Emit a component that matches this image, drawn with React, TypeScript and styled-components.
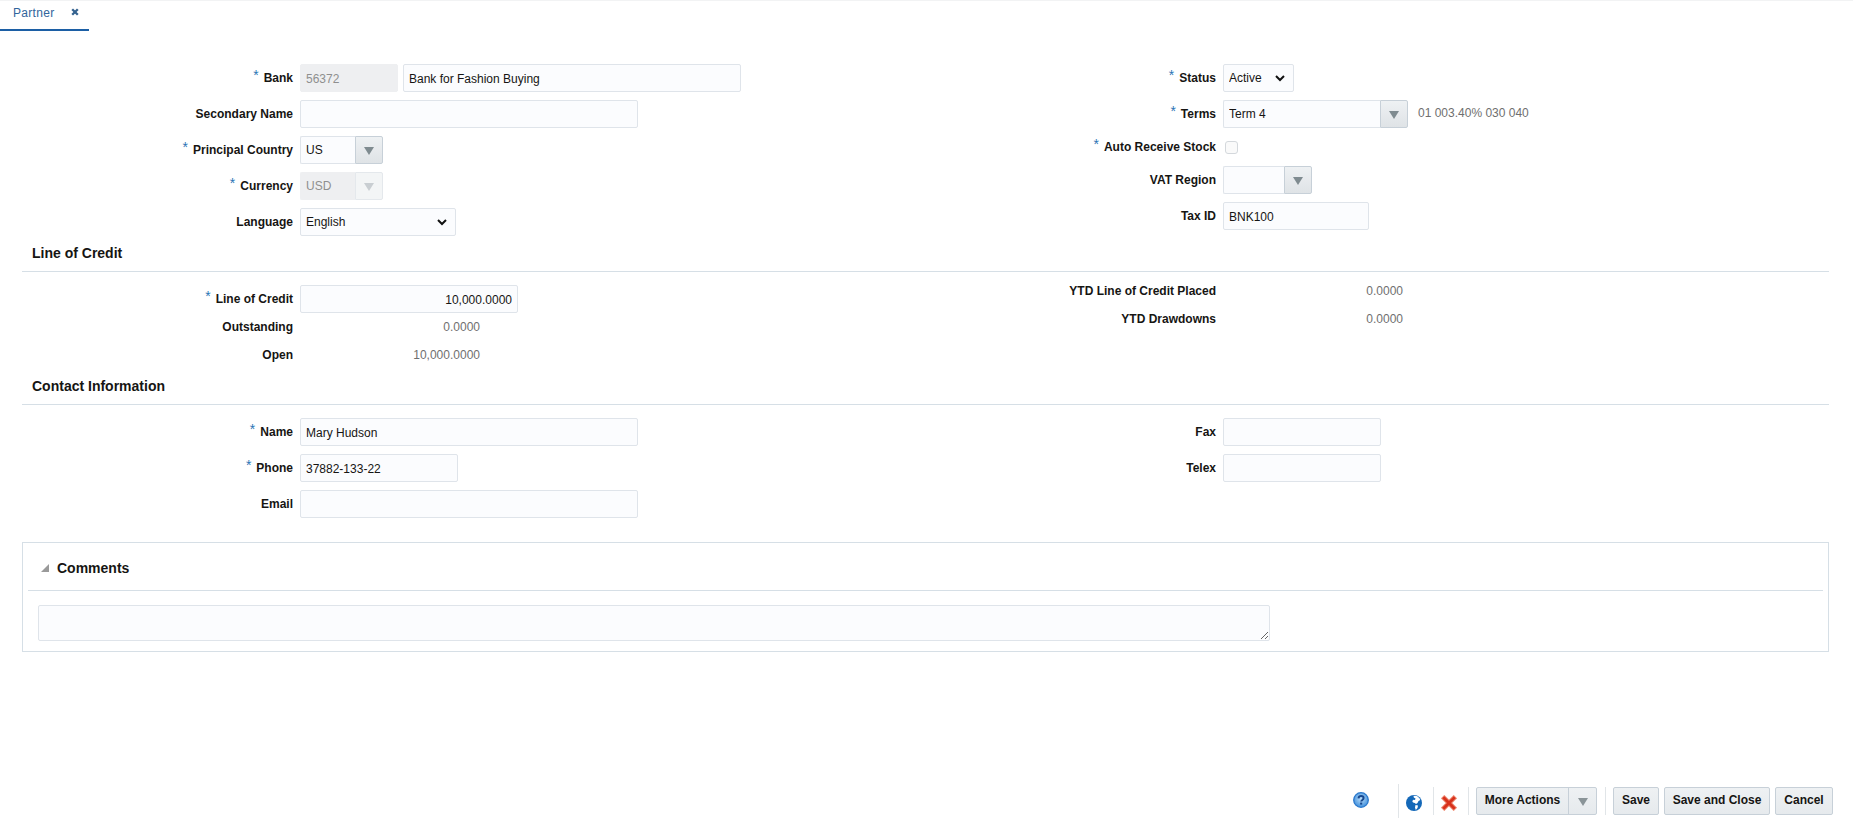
import React from "react";
import styled, { createGlobalStyle } from "styled-components";

const Global = createGlobalStyle`
  html, body { margin: 0; padding: 0; background: #fff; }
  body { font-family: "Liberation Sans", Arial, sans-serif; font-size: 12px; color: #161513; }
  * { box-sizing: border-box; }
`;

const Page = styled.div`
  height: 835px;
  display: flex;
  flex-direction: column;
  overflow: hidden;
  border-top: 1px solid #f2f3f4;
`;

const TabBar = styled.div`
  display: flex;
  height: 30px;
`;

const Tab = styled.div`
  width: 89px;
  height: 30px;
  padding-left: 13px;
  padding-bottom: 5px;
  display: flex;
  align-items: center;
  color: #31659c;
  letter-spacing: 0.3px;
  border-bottom: 2px solid #1c5fa5;
`;

const TabClose = styled.svg`
  width: 8px;
  height: 8px;
  margin-left: 17px;
  margin-top: -1px;
`;

const Content = styled.main`
  padding: 33px 24px 0 22px;
  display: flex;
  flex-direction: column;
`;

const Columns = styled.section`
  display: flex;
  align-items: flex-start;
`;

const Column = styled.div<{ $labelWidth: number; $width?: number; $top?: number }>`
  --label-width: ${(p) => p.$labelWidth}px;
  width: ${(p) => (p.$width ? `${p.$width}px` : "auto")};
  flex: ${(p) => (p.$width ? "none" : "1")};
  padding-top: ${(p) => p.$top ?? 0}px;
  display: flex;
  flex-direction: column;
  gap: 8px;
`;

const Row = styled.div<{ $height?: number; $after?: number }>`
  display: flex;
  align-items: center;
  gap: 7px;
  height: ${(p) => p.$height ?? 28}px;
  margin-bottom: ${(p) => p.$after ?? 0}px;
`;

const Label = styled.label`
  width: var(--label-width);
  flex: none;
  text-align: right;
  font-weight: 700;
  white-space: nowrap;
`;

const Star = styled.span`
  color: #2b75b5;
  font-weight: 400;
  font-size: 14px;
  line-height: 0;
  margin-right: 5px;
  vertical-align: 2px;
`;

const Fields = styled.div`
  display: flex;
  align-items: center;
  gap: 5px;
`;

const TextInput = styled.input<{ $width: number; $right?: boolean; $locked?: boolean }>`
  width: ${(p) => p.$width}px;
  height: 28px;
  padding: 2px 5px 0;
  font: 12px "Liberation Sans", Arial, sans-serif;
  color: ${(p) => (p.$locked ? "#8f8f8f" : "#161513")};
  text-align: ${(p) => (p.$right ? "right" : "left")};
  background: ${(p) => (p.$locked ? "#eeeff1" : "#fbfcfe")};
  border: 1px solid ${(p) => (p.$locked ? "#eeeff1" : "#dfe4ea")};
  border-radius: 2px;
  outline: none;
`;

const Combo = styled.div<{ $width: number }>`
  width: ${(p) => p.$width}px;
  height: 28px;
  display: flex;
`;

const ComboInput = styled.input<{ $locked?: boolean }>`
  flex: 1;
  min-width: 0;
  height: 28px;
  padding: 0 5px;
  font: 12px "Liberation Sans", Arial, sans-serif;
  color: ${(p) => (p.$locked ? "#8f8f8f" : "#161513")};
  background: ${(p) => (p.$locked ? "#eeeff1" : "#fbfcfe")};
  border: 1px solid ${(p) => (p.$locked ? "#eeeff1" : "#dfe4ea")};
  border-right: none;
  border-radius: 2px 0 0 2px;
  outline: none;
`;

const ComboButton = styled.button<{ $locked?: boolean }>`
  width: 28px;
  height: 28px;
  padding: 0;
  display: flex;
  align-items: center;
  justify-content: center;
  border: 1px solid ${(p) => (p.$locked ? "#e4e8ec" : "#c7d0d8")};
  border-radius: 0 2px 2px 0;
  background: ${(p) => (p.$locked ? "#f3f5f6" : "linear-gradient(#eef1f3, #dfe3e6)")};
  color: ${(p) => (p.$locked ? "#c9ced2" : "#7f8b90")};
`;

const Caret = styled.svg`
  width: 10px;
  height: 8px;
  fill: currentColor;
  margin-top: 2px;
`;

const chevron = `url("data:image/svg+xml,%3Csvg xmlns='http://www.w3.org/2000/svg' width='10' height='7' viewBox='0 0 10 7'%3E%3Cpath d='M1 1l4 4 4-4' fill='none' stroke='%23111' stroke-width='2'/%3E%3C/svg%3E")`;

const NativeSelect = styled.select<{ $width: number }>`
  appearance: none;
  width: ${(p) => p.$width}px;
  height: 28px;
  padding: 0 5px;
  font: 12px "Liberation Sans", Arial, sans-serif;
  color: #161513;
  background: #fbfcfe ${chevron} no-repeat right 8px center;
  border: 1px solid #dfe4ea;
  border-radius: 2px;
  outline: none;
`;

const Check = styled.input`
  appearance: none;
  width: 13px;
  height: 13px;
  margin: 0 0 0 2px;
  background: #fafafa;
  border: 1px solid #d4d8dc;
  border-radius: 3px;
`;

const Hint = styled.span`
  margin-left: 3px;
  margin-top: -3px;
  color: #6f6f6f;
`;

const Value = styled.span`
  width: 180px;
  text-align: right;
  color: #6f6f6f;
`;

const Heading = styled.h2<{ $top?: number }>`
  margin: ${(p) => p.$top ?? 0}px 0 0;
  height: 36px;
  padding: 0 0 2px 10px;
  display: flex;
  align-items: center;
  font-size: 14px;
  font-weight: 700;
  border-bottom: 1px solid #d6dfe6;
`;

const Panel = styled.section`
  margin-top: 24px;
  height: 110px;
  padding: 0 5px;
  border: 1px solid #d6dfe6;
`;

const PanelHeader = styled.header`
  height: 48px;
  padding: 3px 0 0 13px;
  display: flex;
  align-items: center;
  gap: 8px;
  font-size: 14px;
  font-weight: 700;
  border-bottom: 1px solid #d6dfe6;
`;

const Disclosure = styled.svg`
  width: 8px;
  height: 8px;
  fill: #9a9a9a;
  margin-bottom: 1px;
`;

const PanelBody = styled.div`
  padding: 14px 0 0 10px;
`;

const Comment = styled.textarea`
  display: block;
  width: 1232px;
  height: 36px;
  background: #fbfcfe;
  border: 1px solid #dfe4ea;
  border-radius: 2px;
  outline: none;
  resize: both;
`;

const Footer = styled.footer`
  margin-top: auto;
  height: 68px;
  padding: 20px 20px 20px 0;
  display: flex;
  justify-content: flex-end;
  align-items: center;
`;

const HelpIcon = styled.svg`
  width: 16px;
  height: 16px;
  margin: 0 29px 3px 0;
`;

const ToolIcon = styled.svg`
  width: 16px;
  height: 16px;
  margin: 4px 3px 0 0;
`;

const Separator = styled.span<{ $tall?: boolean }>`
  flex: none;
  width: 1px;
  height: ${(p) => (p.$tall ? 34 : 28)}px;
  margin: 0 7px 0 0;
  background: #e1e5e8;
`;

const AfterIcon = styled(Separator)`
  margin-left: 8px;
`;

const Button = styled.button<{ $width: number; $left?: number }>`
  width: ${(p) => p.$width}px;
  height: 28px;
  margin-left: ${(p) => p.$left ?? 5}px;
  padding: 0 0 3px;
  font: 700 12px "Liberation Sans", Arial, sans-serif;
  color: #161513;
  background: linear-gradient(#eef1f3, #e6eaed);
  border: 1px solid #c7d0d8;
  border-radius: 2px;
`;

const SplitButton = styled.div`
  width: 121px;
  height: 28px;
  display: flex;
  align-items: center;
  background: linear-gradient(#eef1f3, #e6eaed);
  border: 1px solid #c7d0d8;
  border-radius: 2px;
`;

const SplitLabel = styled.span`
  width: 92px;
  padding-bottom: 3px;
  height: 26px;
  display: flex;
  align-items: center;
  justify-content: center;
  font-weight: 700;
  border-right: 1px solid #c7d0d8;
`;

const SplitCaret = styled.span`
  flex: 1;
  display: flex;
  justify-content: center;
  color: #8a9498;
`;

const DownCaret = () => (
  <Caret viewBox="0 0 10 8">
    <path d="M0 0h10L5 8z" />
  </Caret>
);

const Required = () => <Star>*</Star>;

export default function App() {
  return (
    <Page>
      <Global />
      <TabBar>
        <Tab>
          Partner
          <TabClose viewBox="0 0 8 8">
            <path d="M1.200 1.200l5.600 5.600M6.800 1.200l-5.600 5.600" stroke="#34628f" strokeWidth="2.300" />
          </TabClose>
        </Tab>
      </TabBar>
      <Content>
        <Columns>
          <Column $labelWidth={271} $width={901}>
            <Row>
              <Label><Required />Bank</Label>
              <Fields>
                <TextInput $width={98} $locked readOnly defaultValue="56372" />
                <TextInput $width={338} defaultValue="Bank for Fashion Buying" />
              </Fields>
            </Row>
            <Row>
              <Label>Secondary Name</Label>
              <TextInput $width={338} />
            </Row>
            <Row>
              <Label><Required />Principal Country</Label>
              <Combo $width={83}>
                <ComboInput defaultValue="US" />
                <ComboButton><DownCaret /></ComboButton>
              </Combo>
            </Row>
            <Row>
              <Label><Required />Currency</Label>
              <Combo $width={83}>
                <ComboInput $locked readOnly defaultValue="USD" />
                <ComboButton $locked disabled><DownCaret /></ComboButton>
              </Combo>
            </Row>
            <Row>
              <Label>Language</Label>
              <NativeSelect $width={156} defaultValue="English">
                <option>English</option>
              </NativeSelect>
            </Row>
          </Column>
          <Column $labelWidth={293}>
            <Row>
              <Label><Required />Status</Label>
              <NativeSelect $width={71} defaultValue="Active">
                <option>Active</option>
              </NativeSelect>
            </Row>
            <Row>
              <Label><Required />Terms</Label>
              <Combo $width={185}>
                <ComboInput defaultValue="Term 4" />
                <ComboButton><DownCaret /></ComboButton>
              </Combo>
              <Hint>01 003.40% 030 040</Hint>
            </Row>
            <Row $height={22}>
              <Label><Required />Auto Receive Stock</Label>
              <Check type="checkbox" />
            </Row>
            <Row>
              <Label>VAT Region</Label>
              <Combo $width={89}>
                <ComboInput />
                <ComboButton><DownCaret /></ComboButton>
              </Combo>
            </Row>
            <Row>
              <Label>Tax ID</Label>
              <TextInput $width={146} defaultValue="BNK100" />
            </Row>
          </Column>
        </Columns>

        <Heading>Line of Credit</Heading>
        <Columns>
          <Column $labelWidth={271} $width={901} $top={13}>
            <Row $after={-4}>
              <Label><Required />Line of Credit</Label>
              <TextInput $width={218} $right defaultValue="10,000.0000" />
            </Row>
            <Row $height={20}>
              <Label>Outstanding</Label>
              <Value>0.0000</Value>
            </Row>
            <Row $height={20}>
              <Label>Open</Label>
              <Value>10,000.0000</Value>
            </Row>
          </Column>
          <Column $labelWidth={293} $top={9}>
            <Row $height={20}>
              <Label>YTD Line of Credit Placed</Label>
              <Value>0.0000</Value>
            </Row>
            <Row $height={20}>
              <Label>YTD Drawdowns</Label>
              <Value>0.0000</Value>
            </Row>
          </Column>
        </Columns>

        <Heading $top={4}>Contact Information</Heading>
        <Columns>
          <Column $labelWidth={271} $width={901} $top={13}>
            <Row>
              <Label><Required />Name</Label>
              <TextInput $width={338} defaultValue="Mary Hudson" />
            </Row>
            <Row>
              <Label><Required />Phone</Label>
              <TextInput $width={158} defaultValue="37882-133-22" />
            </Row>
            <Row>
              <Label>Email</Label>
              <TextInput $width={338} />
            </Row>
          </Column>
          <Column $labelWidth={293} $top={13}>
            <Row>
              <Label>Fax</Label>
              <TextInput $width={158} />
            </Row>
            <Row>
              <Label>Telex</Label>
              <TextInput $width={158} />
            </Row>
          </Column>
        </Columns>

        <Panel>
          <PanelHeader>
            <Disclosure viewBox="0 0 8 8">
              <path d="M8 0v8H0z" />
            </Disclosure>
            Comments
          </PanelHeader>
          <PanelBody>
            <Comment />
          </PanelBody>
        </Panel>
      </Content>

      <Footer>
        <HelpIcon viewBox="0 0 16 16">
          <defs>
            <radialGradient id="helpFill" cx="50%" cy="42%" r="58%">
              <stop offset="0%" stopColor="#b9dcf8" />
              <stop offset="100%" stopColor="#3f8fdc" />
            </radialGradient>
          </defs>
          <circle cx="8" cy="8" r="7.300" fill="url(#helpFill)" stroke="#2a78cc" strokeWidth="1.300" />
          <path d="M5.500 6.300c.2-1.600 1.300-2.300 2.600-2.300 1.500 0 2.500.9 2.500 2.100 0 1.900-2.400 1.800-2.400 3.500" fill="none" stroke="#17488f" strokeWidth="2" />
          <rect x="7.100" y="10.600" width="2.100" height="2" fill="#17488f" />
        </HelpIcon>
        <Separator $tall />
        <ToolIcon viewBox="0 0 16 16">
          <circle cx="8" cy="8" r="8" fill="#1468b8" />
          <path d="M7.500.8 11 1l2.500 2.200.8 1.800-1.800 1-1 2-1.500 1-1.200-1-1.800-.5-.8-1.500 1.300-1.200 1.500.2.500-1.500-1.700-1zM9.500 10l2.500.5-.5 2.500-1.700 2-.8-2.500z" fill="#fff" />
        </ToolIcon>
        <AfterIcon />
        <ToolIcon viewBox="0 0 16 16">
          <path d="M3.300 3.300l9.400 9.400M12.700 3.300l-9.400 9.400" stroke="#ef8f78" strokeWidth="4.800" strokeLinecap="square" />
          <path d="M3.300 3.300l9.400 9.400M12.700 3.300l-9.400 9.400" stroke="#d8321c" strokeWidth="3" strokeLinecap="square" />
        </ToolIcon>
        <AfterIcon />
        <SplitButton>
          <SplitLabel>More Actions</SplitLabel>
          <SplitCaret><DownCaret /></SplitCaret>
        </SplitButton>
        <AfterIcon />
        <Button $width={46} $left={0}>Save</Button>
        <Button $width={106}>Save and Close</Button>
        <Button $width={58}>Cancel</Button>
      </Footer>
    </Page>
  );
}
